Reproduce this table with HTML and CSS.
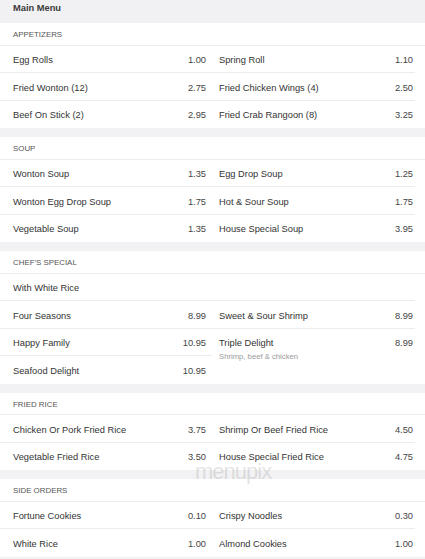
FILE: index.html
```html
<!DOCTYPE html>
<html>
<head>
<meta charset="utf-8">
<link rel="stylesheet" href="styles.css">
</head>
<body>
<div class="page">
  <div class="menu-head">Main Menu</div>

  <section class="sec">
    <div class="sec-title">APPETIZERS</div>
    <div class="cols">
      <div class="col left">
        <div class="item"><span class="name">Egg Rolls</span><span class="price">1.00</span></div>
        <div class="item"><span class="name">Fried Wonton (12)</span><span class="price">2.75</span></div>
        <div class="item"><span class="name">Beef On Stick (2)</span><span class="price">2.95</span></div>
      </div>
      <div class="col right">
        <div class="item"><span class="name">Spring Roll</span><span class="price">1.10</span></div>
        <div class="item"><span class="name">Fried Chicken Wings (4)</span><span class="price">2.50</span></div>
        <div class="item"><span class="name">Fried Crab Rangoon (8)</span><span class="price">3.25</span></div>
      </div>
    </div>
  </section>

  <section class="sec">
    <div class="sec-title">SOUP</div>
    <div class="cols">
      <div class="col left">
        <div class="item"><span class="name">Wonton Soup</span><span class="price">1.35</span></div>
        <div class="item"><span class="name">Wonton Egg Drop Soup</span><span class="price">1.75</span></div>
        <div class="item"><span class="name">Vegetable Soup</span><span class="price">1.35</span></div>
      </div>
      <div class="col right">
        <div class="item"><span class="name">Egg Drop Soup</span><span class="price">1.25</span></div>
        <div class="item"><span class="name">Hot &amp; Sour Soup</span><span class="price">1.75</span></div>
        <div class="item"><span class="name">House Special Soup</span><span class="price">3.95</span></div>
      </div>
    </div>
  </section>

  <section class="sec">
    <div class="sec-title">CHEF'S SPECIAL</div>
    <div class="note">With White Rice</div>
    <div class="cols">
      <div class="col left">
        <div class="item"><span class="name">Four Seasons</span><span class="price">8.99</span></div>
        <div class="item"><span class="name">Happy Family</span><span class="price">10.95</span></div>
        <div class="item"><span class="name">Seafood Delight</span><span class="price">10.95</span></div>
      </div>
      <div class="col right">
        <div class="item"><span class="name">Sweet &amp; Sour Shrimp</span><span class="price">8.99</span></div>
        <div class="item tall"><span class="name">Triple Delight<span class="desc">Shrimp, beef &amp; chicken</span></span><span class="price">8.99</span></div>
      </div>
    </div>
  </section>

  <section class="sec">
    <div class="sec-title">FRIED RICE</div>
    <div class="cols">
      <div class="col left">
        <div class="item"><span class="name">Chicken Or Pork Fried Rice</span><span class="price">3.75</span></div>
        <div class="item"><span class="name">Vegetable Fried Rice</span><span class="price">3.50</span></div>
      </div>
      <div class="col right">
        <div class="item"><span class="name">Shrimp Or Beef Fried Rice</span><span class="price">4.50</span></div>
        <div class="item"><span class="name">House Special Fried Rice</span><span class="price">4.75</span></div>
      </div>
    </div>
  </section>

  <section class="sec">
    <div class="sec-title">SIDE ORDERS</div>
    <div class="cols">
      <div class="col left">
        <div class="item"><span class="name">Fortune Cookies</span><span class="price">0.10</span></div>
        <div class="item"><span class="name">White Rice</span><span class="price">1.00</span></div>
      </div>
      <div class="col right">
        <div class="item"><span class="name">Crispy Noodles</span><span class="price">0.30</span></div>
        <div class="item"><span class="name">Almond Cookies</span><span class="price">1.00</span></div>
      </div>
    </div>
  </section>

  <div class="watermark">menupix</div>
</div>
</body>
</html>
```

FILE: styles.css
```css
html, body {
  margin: 0;
  padding: 0;
  background: #f2f2f4;
}

.page {
  position: relative;
  font-family: "Liberation Sans", Arial, sans-serif;
  color: #333;
  font-size: 9.3px;
  display: flex;
  flex-direction: column;
  gap: 9px;
  padding-bottom: 10px;
}

.menu-head {
  height: 23px;
  line-height: 17px;
  padding-left: 13px;
  font-weight: bold;
  color: #3a3a3a;
  background: #f1f1f3;
  margin-bottom: -9px;
}

.sec {
  background: #fff;
}

.sec-title {
  height: 21.5px;
  line-height: 23px;
  padding-left: 13px;
  font-size: 7.9px;
  color: #555;
  border-bottom: 1px solid #ececec;
}

.note {
  height: 26.5px;
  line-height: 28px;
  padding-left: 13px;
  border-bottom: 1px solid #ececec;
  margin-right: 10px;
}

.cols {
  display: grid;
  grid-template-columns: 212px 203px;
  align-items: start;
}

.col {
  display: flex;
  flex-direction: column;
}

.item {
  display: flex;
  justify-content: space-between;
  align-items: flex-start;
  border-bottom: 1px solid #ececec;
  padding-top: 9.5px;
  box-sizing: content-box;
  height: 17px;
  line-height: 11px;
}

.item:last-child {
  border-bottom: none;
  height: 18px;
}

.left .item {
  padding-left: 13px;
  padding-right: 6px;
}

.right .item {
  padding-left: 7px;
  padding-right: 2px;
}

.name {
  display: flex;
  flex-direction: column;
}

.price {
  color: #444;
}

.desc {
  font-size: 7.7px;
  color: #9a9a9a;
  line-height: 10px;
  margin-top: 3px;
}

.watermark {
  position: absolute;
  left: 195px;
  top: 465px;
  font-size: 22px;
  line-height: 14px;
  letter-spacing: -1px;
  color: rgba(160, 160, 160, 0.3);
  font-family: "Liberation Sans", Arial, sans-serif;
  pointer-events: none;
}
```
